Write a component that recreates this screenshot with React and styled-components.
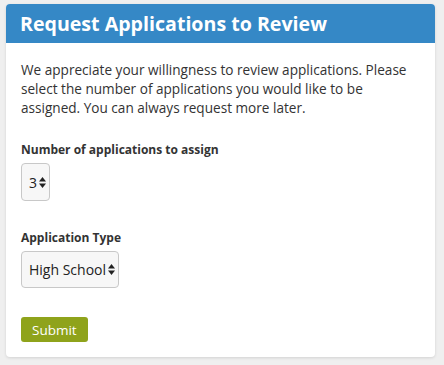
import React from "react";
import styled, { createGlobalStyle } from "styled-components";

const Global = createGlobalStyle`
  html, body { margin: 0; padding: 0; background: #efefef; }
  body { font-family: "Open Sans", Lato, sans-serif; color: #333; }
`;

const Page = styled.div`
  padding: 4px 9px 8px 6px;
`;

const Card = styled.div`
  background: #fff;
  border-radius: 4px;
  box-shadow: 0 1px 3px rgba(0,0,0,0.12);
  overflow: hidden;
`;

const Header = styled.div`
  background: #3588c6;
  height: 39px;
  display: flex;
  align-items: center;
  padding: 0 20px 0 14px;
`;

const Title = styled.h1`
  margin: 0;
  color: #fff;
  font-size: 19.6px;
  font-weight: 700;
  letter-spacing: 0;
`;

const Body = styled.div`
  padding: 17px 15px 15px 15px;
  display: flex;
  flex-direction: column;
`;

const Intro = styled.p`
  margin: 0 0 25px;
  max-width: 392px;
  font-size: 13.6px;
  line-height: 19px;
  color: #333;
`;

const Field = styled.div`
  display: flex;
  flex-direction: column;
  align-items: flex-start;
  margin-bottom: ${p => p.$mb}px;
`;

const Label = styled.label`
  font-size: 12px;
  line-height: 16px;
  font-weight: 700;
  color: #333;
  margin-bottom: 5px;
`;

const SelectBox = styled.div`
  display: flex;
  align-items: center;
  gap: 2px;
  height: ${p => p.$h}px;
  padding: 0 3px 0 7px;
  box-sizing: border-box;
  border: 1px solid #c8c8c8;
  border-radius: 4px;
  background: #f7f7f7;
  font-size: 14px;
  color: #222;
`;

const Arrows = () => (
  <svg width="7" height="11" viewBox="0 0 7 11">
    <path d="M3.5 0 L7 4.5 H0 Z" fill="#222" />
    <path d="M3.5 11 L7 6.5 H0 Z" fill="#222" />
  </svg>
);

const Button = styled.button`
  align-self: flex-start;
  background: #8fa31b;
  color: #fff;
  border: none;
  border-radius: 3px;
  font-family: "Open Sans", Lato, sans-serif;
  font-size: 13.5px;
  height: 25px;
  padding: 0 11px;
`;

export default function App() {
  return (
    <>
      <Global />
      <Page>
        <Card>
          <Header>
            <Title>Request Applications to Review</Title>
          </Header>
          <Body>
            <Intro>
              We appreciate your willingness to review applications. Please select the
              number of applications you would like to be assigned. You can always
              request more later.
            </Intro>
            <Field $mb={29}>
              <Label>Number of applications to assign</Label>
              <SelectBox $h={38}>3<Arrows /></SelectBox>
            </Field>
            <Field $mb={29}>
              <Label>Application Type</Label>
              <SelectBox $h={37}>High School<Arrows /></SelectBox>
            </Field>
            <Button>Submit</Button>
          </Body>
        </Card>
      </Page>
    </>
  );
}
